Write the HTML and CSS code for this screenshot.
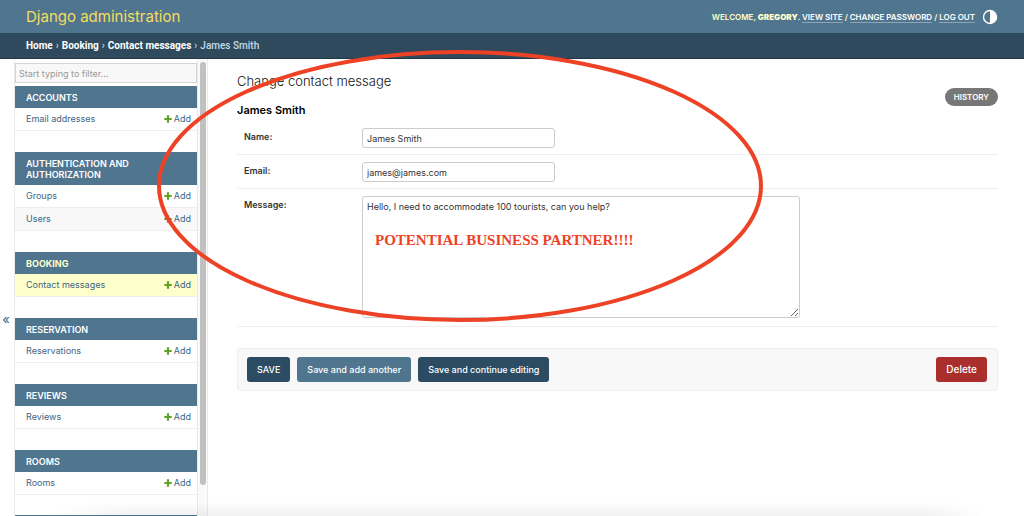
FILE: index.html
```html
<!DOCTYPE html>
<html lang="en">
<head>
<meta charset="utf-8">
<meta name="viewport" content="width=device-width, initial-scale=1">
<title>James Smith | Change contact message | Django site admin</title>
<link rel="stylesheet" href="styles.css">
</head>
<body>
<svg class="defs" aria-hidden="true"><symbol id="plus" viewBox="0 0 8 8"><path d="M2.9 0.3H5.1V2.9H7.7V5.1H5.1V7.7H2.9V5.1H0.3V2.9H2.9Z" fill="#5fa225"/></symbol></svg>
<header class="header">
  <a class="brand" href="#">Django administration</a>
  <div class="user-tools">
    <span>Welcome, <strong>Gregory</strong>. <a href="#">View site</a> / <a href="#">Change password</a> / <a href="#">Log out</a></span>
    <button class="theme" type="button" aria-label="Toggle theme"><svg viewBox="0 0 16 16"><circle cx="8" cy="8" r="6.5" fill="none" stroke="#fff" stroke-width="1.4"/><path d="M8 1.5a6.5 6.5 0 0 1 0 13Z" fill="#fff"/></svg></button>
  </div>
</header>
<nav class="breadcrumbs" aria-label="Breadcrumbs"><a href="#">Home</a><span>›</span><a href="#">Booking</a><span>›</span><a href="#">Contact messages</a><span>›</span>James Smith</nav>
<div class="main">
  <button class="toggle" type="button" aria-label="Toggle navigation">«</button>
  <nav class="sidebar" aria-label="Sidebar">
    <div class="modules">
      <input class="filter" type="search" placeholder="Start typing to filter..." aria-label="Filter navigation items">
      <table class="module"><caption><a href="#">Accounts</a></caption>
        <tr><th scope="row"><a href="#">Email addresses</a></th><td><a href="#"><svg class="plus"><use href="#plus"/></svg>Add</a></td></tr></table>
      <table class="module"><caption><a href="#">Authentication and Authorization</a></caption>
        <tr><th scope="row"><a href="#">Groups</a></th><td><a href="#"><svg class="plus"><use href="#plus"/></svg>Add</a></td></tr>
        <tr><th scope="row"><a href="#">Users</a></th><td><a href="#"><svg class="plus"><use href="#plus"/></svg>Add</a></td></tr></table>
      <table class="module current"><caption><a href="#">Booking</a></caption>
        <tr><th scope="row"><a href="#">Contact messages</a></th><td><a href="#"><svg class="plus"><use href="#plus"/></svg>Add</a></td></tr></table>
      <table class="module"><caption><a href="#">Reservation</a></caption>
        <tr><th scope="row"><a href="#">Reservations</a></th><td><a href="#"><svg class="plus"><use href="#plus"/></svg>Add</a></td></tr></table>
      <table class="module"><caption><a href="#">Reviews</a></caption>
        <tr><th scope="row"><a href="#">Reviews</a></th><td><a href="#"><svg class="plus"><use href="#plus"/></svg>Add</a></td></tr></table>
      <table class="module"><caption><a href="#">Rooms</a></caption>
        <tr><th scope="row"><a href="#">Rooms</a></th><td><a href="#"><svg class="plus"><use href="#plus"/></svg>Add</a></td></tr></table>
      <div class="module-next"></div>
    </div>
    <div class="track"><div class="thumb"></div></div>
  </nav>
  <main class="content">
    <h1>Change contact message</h1>
    <div class="object-head"><h2>James Smith</h2><a class="history" href="#">History</a></div>
    <form>
      <div class="row"><label for="name">Name:</label><input id="name" type="text" value="James Smith"></div>
      <div class="row"><label for="email">Email:</label><input id="email" type="email" value="james@james.com"></div>
      <div class="row tall"><label for="message">Message:</label><textarea id="message">Hello, I need to accommodate 100 tourists, can you help?</textarea></div>
      <div class="submit">
        <button class="dark" type="button">SAVE</button>
        <button type="button">Save and add another</button>
        <button class="dark" type="button">Save and continue editing</button>
        <a class="delete" href="#">Delete</a>
      </div>
    </form>
  </main>
</div>
<svg class="ring" width="612" height="276" viewBox="0 0 612 276" aria-hidden="true"><ellipse cx="306" cy="138" rx="301" ry="134" fill="none" stroke="#ed4226" stroke-width="4"/></svg>
<strong class="note">POTENTIAL BUSINESS PARTNER!!!!</strong>
<div class="shade"></div>
</body>
</html>
```
FILE: styles.css
```css
* { box-sizing: border-box; }
body {
  margin: 0;
  height: 100vh;
  display: flex;
  flex-direction: column;
  overflow: hidden;
  background: #fff;
  color: #333;
  font: 9px/12px Inter, "Liberation Sans", sans-serif;
}
a { color: #3d6583; text-decoration: none; }
button, input, textarea { font: inherit; color: inherit; }
button { border: 0; padding: 0; }
.defs { display: none; }

.header {
  flex: none;
  display: flex;
  align-items: center;
  justify-content: space-between;
  height: 33px;
  padding: 0 26px;
  background: #50758f;
  color: #ffc;
}
.brand { color: #f5dd5d; font-size: 15px; line-height: 20px; font-weight: 400; }
.user-tools {
  display: flex;
  align-items: center;
  gap: 7px;
  font-size: 8px;
  line-height: 10px;
  font-weight: 600;
  text-transform: uppercase;
}
.user-tools a { color: #fff; border-bottom: 1px solid #8ca5b5; }
.theme { width: 16px; height: 16px; background: none; }
.theme svg { display: block; width: 16px; height: 16px; }
.breadcrumbs {
  flex: none;
  display: flex;
  align-items: center;
  gap: 3px;
  height: 26px;
  padding: 1px 26px 0;
  background: #2f4a5c;
  border-bottom: 1px solid #20384a;
  color: #c4dce8;
  font-family: Roboto, "Liberation Sans", sans-serif;
  font-size: 10px;
  font-weight: 500;
}
.breadcrumbs a { color: #fff; font-weight: 700; }

.main { flex: 1; min-height: 0; display: flex; }
.toggle { width: 14px; background: #fff; color: #3d6583; font-size: 13px; padding: 62px 2px 0 0; }
.sidebar {
  flex: none;
  display: flex;
  width: 194px;
  overflow: hidden;
  border: solid #eaeaea;
  border-width: 0 1px;
}
.modules { flex: 1; padding-top: 4px; border-right: 1px solid #e8e8e8; }
.filter {
  display: block;
  width: 100%;
  height: 20px;
  margin-bottom: 3px;
  padding: 0 3px;
  border: 1px solid #d4d4d4;
  background: #f8f8f8;
  outline: 0;
}
.filter::placeholder { color: #999; opacity: 1; }
.module { width: 100%; margin-bottom: 21px; border-spacing: 0; }
.module:last-of-type { margin-bottom: 20px; }
.module caption {
  padding: 6px 11px 5px;
  background: #50758f;
  text-align: left;
  text-transform: uppercase;
  font-size: 9px;
  line-height: 11px;
  font-weight: 600;
}
.module caption a { color: #fff; }
.module th, .module td { height: 23px; padding: 0; border-bottom: 1px solid #eee; font-weight: 400; }
.module th { padding-left: 11px; text-align: left; }
.module td { padding-right: 6px; text-align: right; }
.module tr:nth-child(even) { background: #f8f8f8; }
.current tr { background: #ffc; }
.module.current caption a { color: #ffc; font-weight: 700; }
.plus { width: 8px; height: 8px; margin-right: 2px; vertical-align: -1px; }
.module-next { height: 22px; background: #50758f; }
.track { width: 9px; padding: 3px 1px 31px 2px; background: #fafafa; }
.thumb { width: 6px; height: 100%; border-radius: 3px; background: #c1c1c1; }

.content { flex: 1; min-width: 0; padding: 13px 26px 0 29px; }
h1 { margin: 0 0 10px; color: #111; font-size: 13px; line-height: 18px; font-weight: 300; }
.object-head { display: flex; align-items: flex-start; justify-content: space-between; height: 21px; }
h2 { margin: 4px 0 0; color: #000; font-size: 11px; line-height: 12px; font-weight: 600; }
.history {
  margin-top: -12px;
  padding: 3px 9px;
  border-radius: 9px;
  background: #777;
  color: #fff;
  font-size: 8px;
  font-weight: 600;
  text-transform: uppercase;
}
.row { display: flex; align-items: flex-start; padding: 7px 7px 6px; border-bottom: 1px solid #eee; }
.row label { width: 118px; padding-top: 3px; font-weight: 600; }
.row input, .row textarea { border: 1px solid #ccc; border-radius: 3px; padding: 0 4px; background: #fff; outline: 0; }
.row input { width: 193px; height: 20px; }
.row textarea { width: 438px; height: 122px; padding: 4px; resize: vertical; }
.row.tall { padding-bottom: 8px; }
.submit {
  display: flex;
  gap: 7px;
  margin-top: 21px;
  padding: 8px 10px 8px 9px;
  border: 1px solid #eee;
  border-radius: 3px;
  background: #f8f8f8;
}
.submit button, .delete {
  height: 25px;
  padding: 0 10px;
  border-radius: 3px;
  background: #50758f;
  color: #fff;
  line-height: 25px;
  font-weight: 500;
}
.submit .dark { background: #2c4c63; }
.submit .delete { margin-left: auto; background: #aa2e2b; font-size: 10px; }

.ring { position: absolute; left: 154px; top: 48px; pointer-events: none; }
.note {
  position: absolute;
  left: 375px;
  top: 232px;
  color: #ed4226;
  font: 700 15px/17px "Liberation Serif", serif;
  white-space: nowrap;
}
.shade {
  position: absolute;
  inset: auto 0 0;
  height: 14px;
  background: linear-gradient(to bottom, transparent, rgb(0 0 0 / 6%));
  mask-image: linear-gradient(to right, transparent 50px, #000 130px, #000 calc(100% - 100px), transparent calc(100% - 40px));
  pointer-events: none;
}
```
